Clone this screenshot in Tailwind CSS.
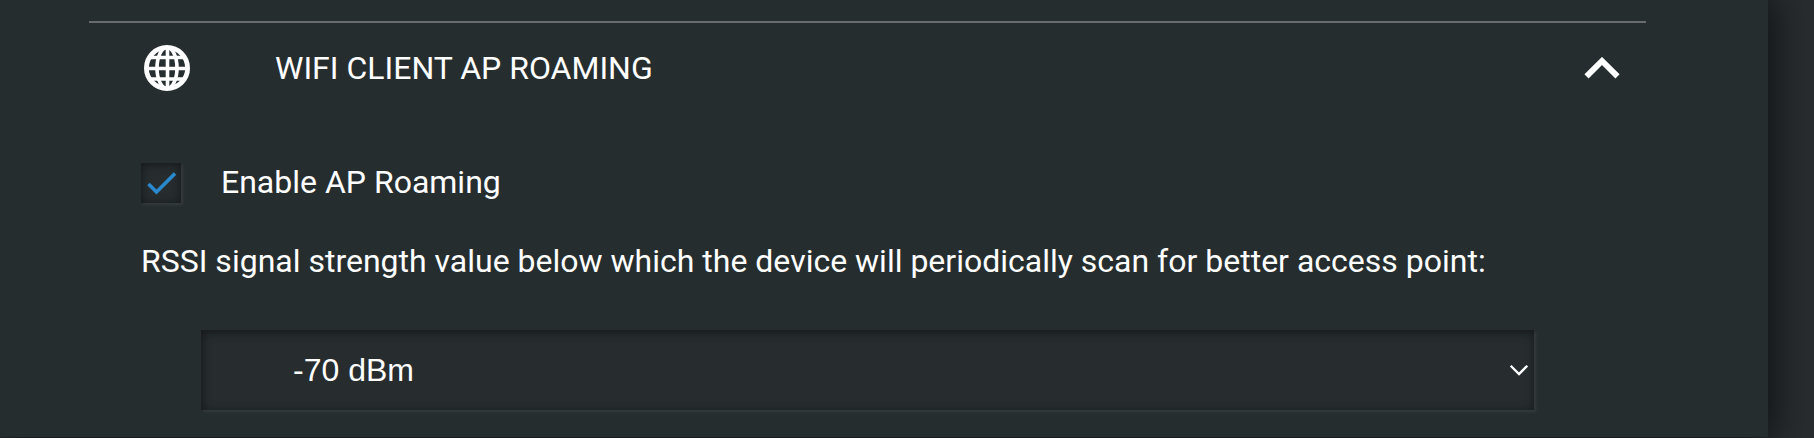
<!DOCTYPE html>
<html lang="en">
<head>
<meta charset="utf-8">
<title>WiFi Client AP Roaming</title>
<script src="https://cdn.jsdelivr.net/npm/@tailwindcss/browser@4"></script>
</head>
<body class="h-[438px] overflow-hidden bg-[#282c2f] font-['Roboto',sans-serif] text-[32px] leading-10 text-white">
<main class="h-[437px] w-[1768px] bg-[#262d2f] pt-[21px] pl-[89px] shadow-[0_0_36px_4px_rgba(0,0,0,0.65)]">
  <section class="w-[1557px] border-t-2 border-[#686c6e]">
    <header class="flex h-[90px] items-center pr-[26px] pl-[55px]">
      <svg class="size-[46px]" viewBox="0 0 46 46" fill="none" stroke="#fff" stroke-width="3.6">
        <circle cx="23" cy="23" r="20.600" stroke-width="4.800"/>
        <ellipse cx="23" cy="23" rx="10" ry="20.500"/>
        <path d="M23.500 2v42M2 23.500h42M6 12.500h34M6 34h34"/>
      </svg>
      <h2 class="ml-[85px] flex-1">WIFI CLIENT AP ROAMING</h2>
      <svg class="h-[22px] w-[36px]" viewBox="0 0 36 22" fill="none" stroke="#fff" stroke-width="5.800"><path d="M2.500 19.400 18 4l15.500 15.400"/></svg>
    </header>
    <div class="pl-[52px]">
      <label class="mt-[49px] flex h-10 items-center">
        <span class="mt-[2px] block size-10 bg-[#272d2f] shadow-[inset_0_1px_10px_1px_rgba(0,0,0,0.45),2px_2px_3px_rgba(255,255,255,0.07)]">
          <svg class="size-10" viewBox="0 0 40 40" fill="none" stroke="#2a88cd" stroke-width="3.600"><path d="M7.500 21l8 8L34 10.500"/></svg>
        </span>
        <span class="ml-10">Enable AP Roaming</span>
      </label>
      <p class="mt-[39px] whitespace-nowrap">RSSI signal strength value below which the device will periodically scan for better access point:</p>
      <div class="mt-[49px] ml-[60px] flex h-20 w-[1333px] items-center bg-[#272d2f] pr-[5px] pl-[92px] font-['Liberation_Sans',sans-serif] shadow-[inset_1px_2px_10px_1px_rgba(0,0,0,0.45),2px_2px_3px_rgba(255,255,255,0.07)]">
        <span class="flex-1">-70 dBm</span>
        <svg class="h-[12px] w-[20px]" viewBox="0 0 20 12" fill="none" stroke="#fff" stroke-width="2.300"><path d="M1.700 1.700 10 10l8.300-8.300"/></svg>
      </div>
    </div>
  </section>
</main>
</body>
</html>
